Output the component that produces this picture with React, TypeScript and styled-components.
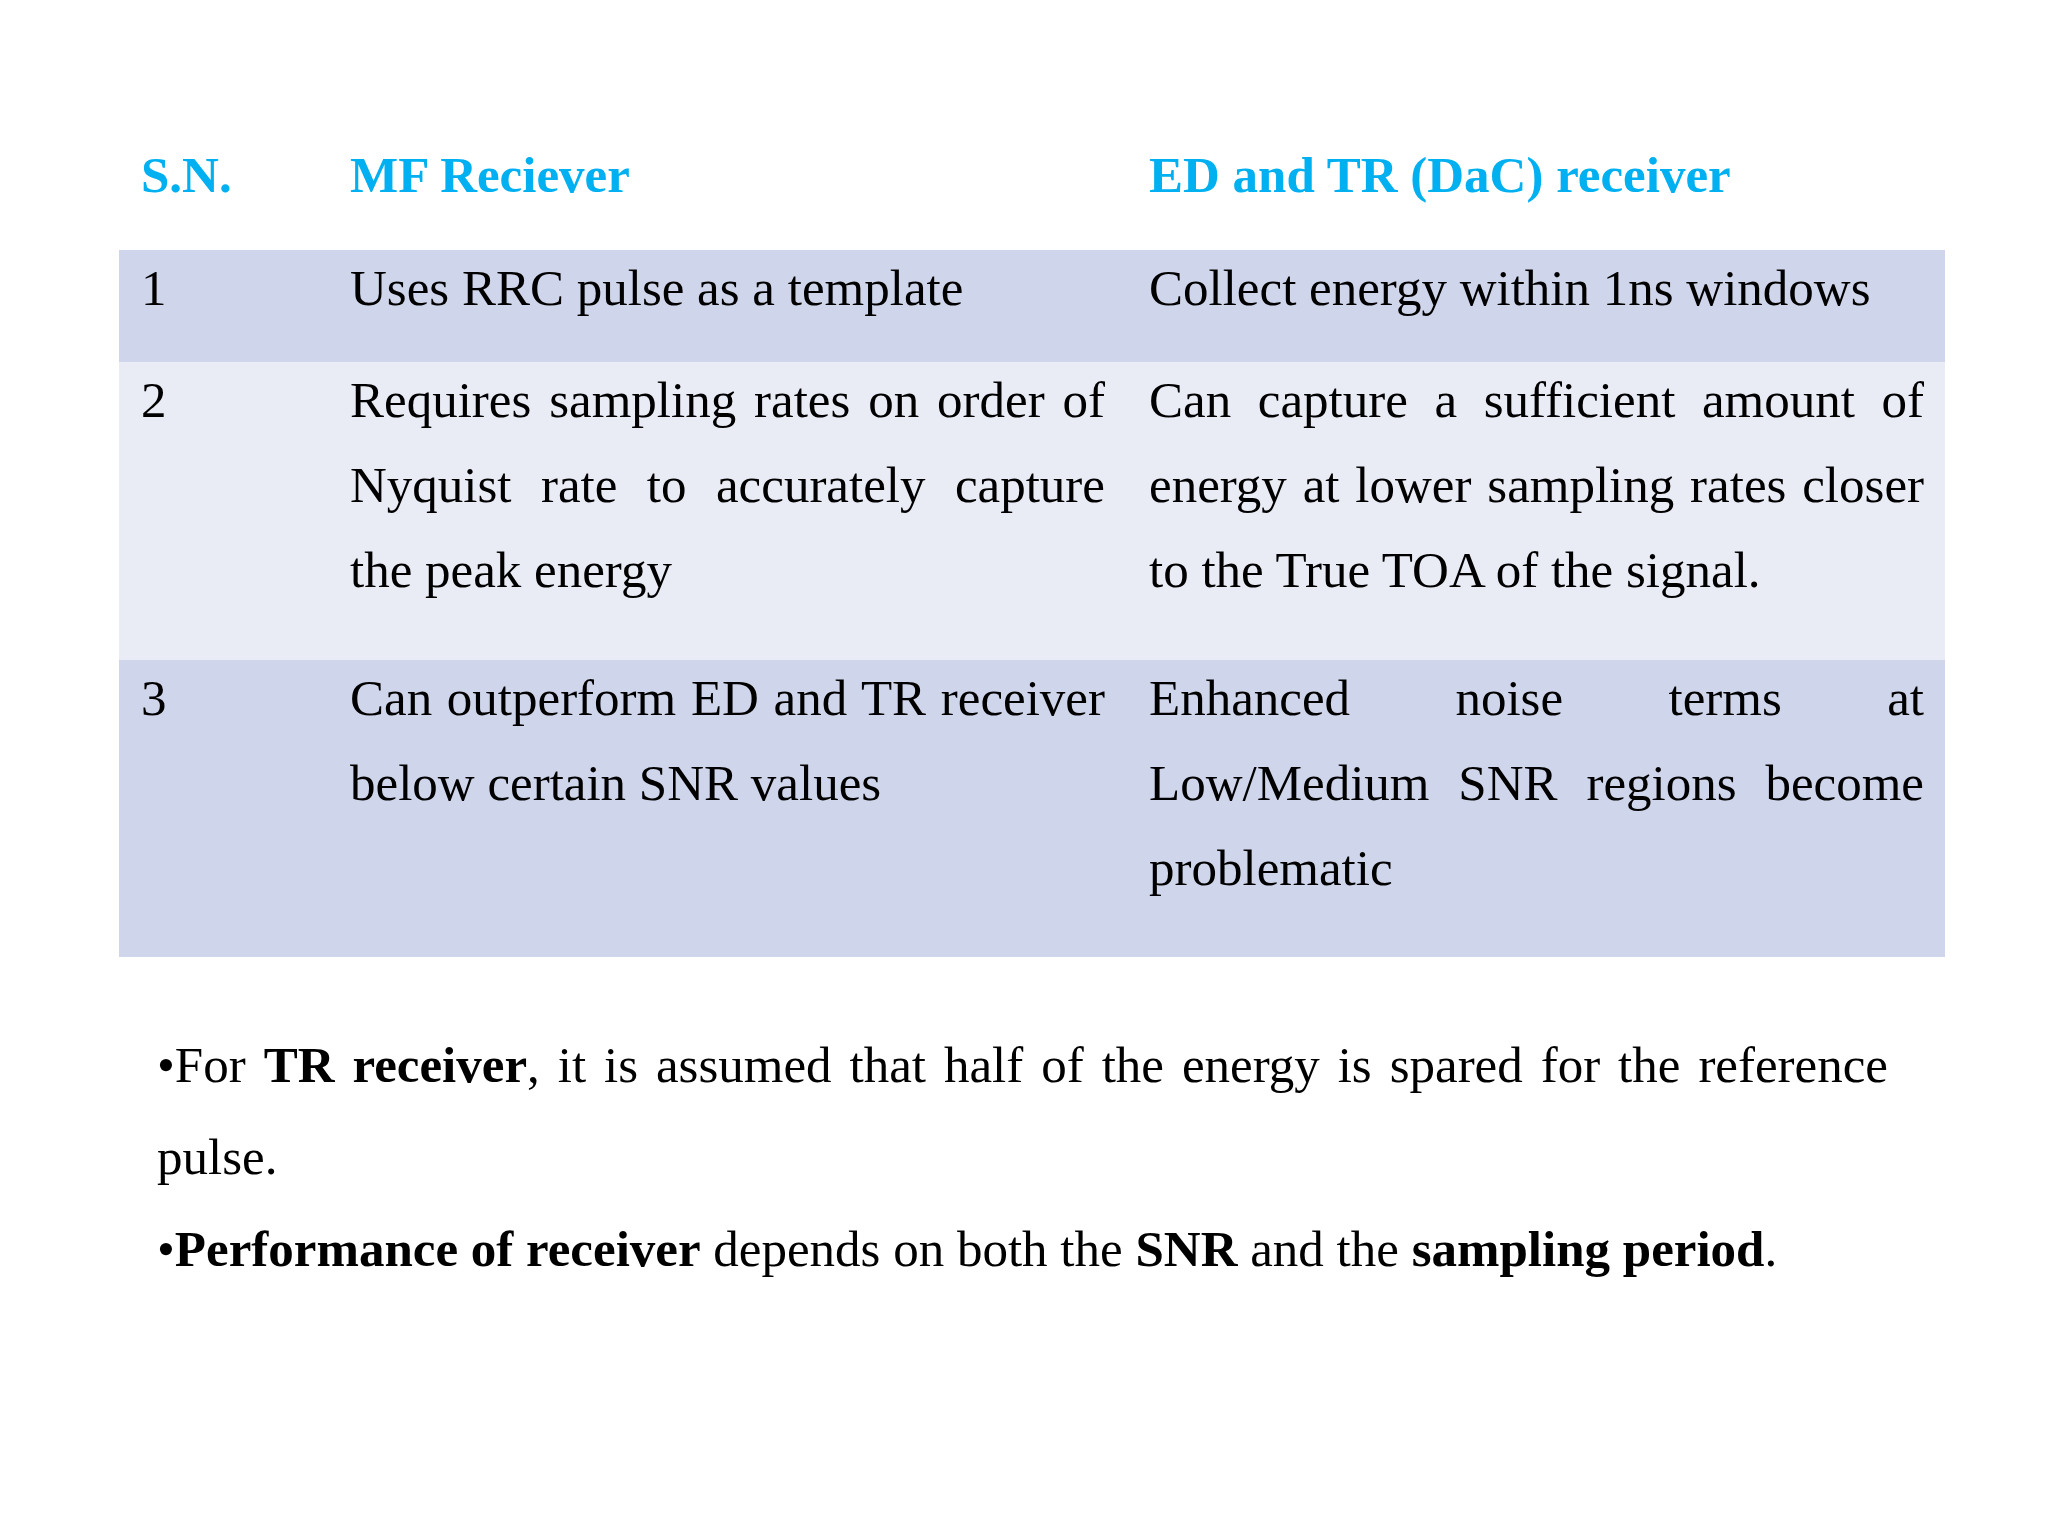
import React from 'react';
import styled, { createGlobalStyle } from 'styled-components';

interface RowData {
  sn: string
  mf: string
  ed: string
  height: number
  shade: 'dark' | 'light'
}

const rows: RowData[] = [
  {
    sn: '1',
    mf: 'Uses RRC pulse as a template',
    ed: 'Collect energy within 1ns windows',
    height: 112,
    shade: 'dark',
  },
  {
    sn: '2',
    mf: 'Requires sampling rates on order of Nyquist rate to accurately capture the peak energy',
    ed: 'Can capture a sufficient amount of energy at lower sampling rates closer to the True TOA of the signal.',
    height: 298,
    shade: 'light',
  },
  {
    sn: '3',
    mf: 'Can outperform ED and TR receiver below certain SNR values',
    ed: 'Enhanced noise terms at Low/Medium SNR regions become problematic',
    height: 297,
    shade: 'dark',
  },
];

const App: React.FC = () => {
  return (
    <>
      <GlobalStyle />
      <Slide>
        <Table>
          <HeaderRow>
            <HeadCell>S.N.</HeadCell>
            <HeadCell>MF Reciever</HeadCell>
            <HeadCell>ED and TR (DaC) receiver</HeadCell>
          </HeaderRow>
          {rows.map((row) => (
            <Row key={row.sn} shade={row.shade} height={row.height}>
              <Cell>{row.sn}</Cell>
              <Cell>{row.mf}</Cell>
              <Cell>{row.ed}</Cell>
            </Row>
          ))}
        </Table>
        <Notes>
          <Note>
            •For <b>TR receiver</b>, it is assumed that half of the energy is spared for the reference pulse.
          </Note>
          <Note>
            •<b>Performance of receiver</b> depends on both the <b>SNR</b> and the <b>sampling period</b>.
          </Note>
        </Notes>
      </Slide>
    </>
  );
};

const GlobalStyle = createGlobalStyle`
  html, body {
    margin: 0;
    padding: 0;
    background: #ffffff;
  }
  body {
    font-family: "Liberation Serif", "Times New Roman", serif;
    color: #000000;
  }
`;

const Slide = styled.div`
  width: 2048px;
  height: 1536px;
  box-sizing: border-box;
  padding: 133px 0 0 119px;
  background: #ffffff;
  overflow: hidden;
`;

const Table = styled.div`
  width: 1826px;
  display: flex;
  flex-direction: column;
`;

const Grid = styled.div`
  display: grid;
  grid-template-columns: 209px 799px 818px;
`;

const HeaderRow = styled(Grid)`
  height: 117px;
`;

const HeadCell = styled.div`
  padding: 0 22px 0 22px;
  font-size: 51px;
  line-height: 85px;
  font-weight: bold;
  color: #00b0f0;
  white-space: nowrap;
`;

const Row = styled(Grid)<{ shade: 'dark' | 'light'; height: number }>`
  height: ${(p) => p.height}px;
  box-sizing: border-box;
  background: ${(p) => (p.shade === 'dark' ? '#cfd5ea' : '#e9ebf5')};
  align-items: start;
`;

const Cell = styled.div`
  margin-top: -4px;
  padding: 0 22px 0 22px;
  font-size: 51px;
  line-height: 85px;
  text-align: justify;

  &:last-child {
    padding-right: 21px;
  }
`;

const Notes = styled.div`
  margin: 62px 0 0 38px;
  width: 1731px;
`;

const Note = styled.p`
  margin: 0;
  font-size: 51px;
  line-height: 92px;
  text-align: justify;

  b {
    font-weight: bold;
  }
`;

export default App;
